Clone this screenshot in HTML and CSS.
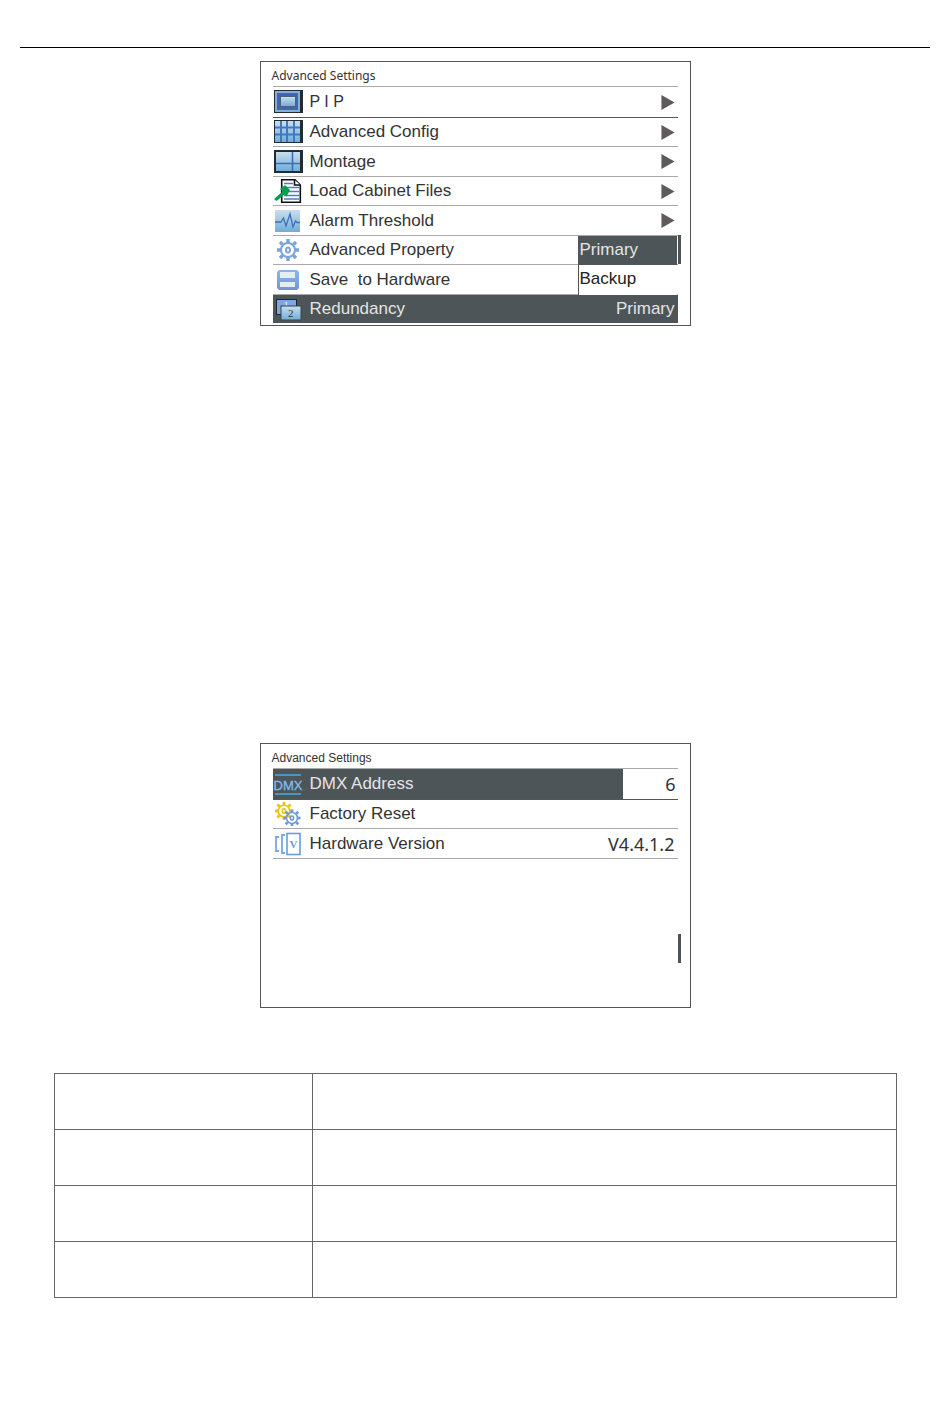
FILE: index.html
```html
<!DOCTYPE html>
<html lang="en">
<head>
  <meta charset="UTF-8" />
  <title>Advanced Settings</title>
  <link rel="stylesheet" href="styles.css">
</head>
<body>
  <svg width="0" height="0" class="defs" aria-hidden="true">
    <defs>
      <linearGradient id="sky" x1="0" y1="0" x2="0" y2="1">
        <stop offset="0" stop-color="#c9dfed"/><stop offset="1" stop-color="#70add9"/>
      </linearGradient>
      <linearGradient id="blue" x1="0" y1="0" x2="0" y2="1">
        <stop offset="0" stop-color="#8fb4e6"/><stop offset="1" stop-color="#6f96d2"/>
      </linearGradient>
      <g id="gear">
        <circle r="7" fill="none" stroke-width="2"/>
        <path d="M0-11V-7M0 7V11M-11 0H-7M7 0H11M-8-8L-5.5-5.5M5.5 5.5L8 8M-8 8L-5.5 5.5M5.5-5.5L8-8" stroke-width="3.4"/>
        <ellipse rx="2" ry="2.6" fill="none" stroke-width="2"/>
      </g>
    </defs>
  </svg>

  <header class="page-rule"></header>

  <main>
    <section class="panel">
      <h2 class="panel-title wide">Advanced Settings</h2>
      <ul class="menu">
        <li>
          <button class="item">
            <svg class="icon" viewBox="0 0 30 24">
              <rect x="1" width="29" height="23" fill="#242b33"/>
              <rect x="2" y="1" width="25" height="21" fill="#7fb0d6"/>
              <rect x="4.5" y="3.5" width="20" height="16" fill="#3e65b3" stroke="#606774"/>
              <rect x="7.5" y="6.5" width="15" height="10" fill="url(#sky)" stroke="#50617c"/>
            </svg>
            <span class="label small">P I P</span>
            <svg class="arrow" viewBox="0 0 14 16"><path d="M0 0L14 8L0 16Z"/></svg>
          </button>
        </li>
        <li class="dark-line">
          <button class="item">
            <svg class="icon" viewBox="0 0 30 24">
              <rect x="1" width="29" height="23" fill="#242b33"/>
              <rect x="2" y="1" width="25" height="21" fill="url(#sky)"/>
              <path d="M8 1V22M14 1V22M21 1V22M2 7.5H27M2 14.5H27" stroke="#4478bd" stroke-width="2"/>
            </svg>
            <span class="label">Advanced Config</span>
            <svg class="arrow" viewBox="0 0 14 16"><path d="M0 0L14 8L0 16Z"/></svg>
          </button>
        </li>
        <li>
          <button class="item">
            <svg class="icon" viewBox="0 0 30 24">
              <rect x="1" width="29" height="23" fill="#242b33"/>
              <rect x="3" y="2" width="24" height="19" fill="url(#sky)"/>
              <path d="M19.5 2V21M3 13.5H27" stroke="#3c70b5" stroke-width="1.6"/>
            </svg>
            <span class="label">Montage</span>
            <svg class="arrow" viewBox="0 0 14 16"><path d="M0 0L14 8L0 16Z"/></svg>
          </button>
        </li>
        <li>
          <button class="item">
            <svg class="icon" viewBox="0 0 30 24">
              <path d="M8.7.7H22L27.3 6V23.3H8.7Z" fill="#fff" stroke="#111" stroke-width="1.6"/>
              <path d="M21.5.7V6H27.3" fill="#fff" stroke="#111" stroke-width="1.6"/>
              <path d="M11 4.5H20M11 8.5H26M11 12.5H26M11 16.5H26M11 20H26" stroke="#527bc1" stroke-width="1.5"/>
              <path d="M1 20L3.5 22L11.5 15.5L13.5 17.5L17 11L12 6L7 10L9.5 12.5Z" fill="#00a052"/>
            </svg>
            <span class="label">Load Cabinet Files</span>
            <svg class="arrow" viewBox="0 0 14 16"><path d="M0 0L14 8L0 16Z"/></svg>
          </button>
        </li>
        <li>
          <button class="item">
            <svg class="icon" viewBox="0 0 30 24">
              <rect x="2" y="1" width="25" height="22" fill="url(#sky)"/>
              <path d="M2 13H8L10.5 9L13 17L17 5L20 18L22.5 12L24 13.5H27" fill="none" stroke="#3f6fb8" stroke-width="1.3"/>
            </svg>
            <span class="label">Alarm Threshold</span>
            <svg class="arrow" viewBox="0 0 14 16"><path d="M0 0L14 8L0 16Z"/></svg>
          </button>
        </li>
        <li>
          <button class="item">
            <svg class="icon" viewBox="0 0 30 24">
              <use href="#gear" transform="translate(15 12)" stroke="#7ba4dc"/>
            </svg>
            <span class="label">Advanced Property</span>
          </button>
        </li>
        <li>
          <button class="item">
            <svg class="icon" viewBox="0 0 30 24">
              <path d="M6 2H24L26 4V20L24 22H6L4 20V4Z" fill="url(#blue)"/>
              <rect x="7" y="4" width="15" height="6" fill="#e3edf5"/>
              <rect x="7" y="14" width="15" height="5" fill="#e3edf5"/>
            </svg>
            <span class="label">Save&nbsp; to Hardware</span>
          </button>
        </li>
        <li class="selected">
          <div class="item">
            <svg class="icon" viewBox="0 0 30 24">
              <rect x="3.5" y="2.5" width="20" height="15" fill="#7da6e2" stroke="#20262b"/>
              <text x="11" y="10" font-size="8" fill="#fff">1</text>
              <rect x="8" y="9" width="20" height="14" fill="url(#sky)" stroke="#34424d"/>
              <text class="serif" x="15" y="20" font-size="11" fill="#333">2</text>
            </svg>
            <label class="label" for="redundancy">Redundancy</label>
            <output class="value" for="redundancy">Primary</output>
          </div>
          <select id="redundancy" class="options" size="2">
            <option selected>Primary</option>
            <option>Backup</option>
          </select>
        </li>
      </ul>
      <span class="scroll-mark upper"></span>
    </section>

    <section class="panel">
      <h2 class="panel-title">Advanced Settings</h2>
      <ul class="menu">
        <li class="editing">
          <div class="item">
            <svg class="icon" viewBox="0 0 30 24">
              <path d="M2 3H28M2 22H28" stroke="#4aa8e8" stroke-width="1.6"/>
              <text class="dmx" x="15" y="18" text-anchor="middle">DMX</text>
            </svg>
            <label class="label" for="dmx">DMX Address</label>
          </div>
          <input id="dmx" class="number" type="text" value="6">
        </li>
        <li class="dark-line">
          <button class="item">
            <svg class="icon" viewBox="0 0 30 24">
              <use href="#gear" transform="translate(11 9) scale(.82)" stroke="#e8c313"/>
              <use href="#gear" transform="translate(19 16) scale(.78)" stroke="#6e9ad7"/>
            </svg>
            <span class="label">Factory Reset</span>
          </button>
        </li>
        <li>
          <div class="item">
            <svg class="icon" viewBox="0 0 30 24">
              <path d="M6 5H3V19H6M12 3H9V21H12" fill="none" stroke="#7ba7df" stroke-width="1.8"/>
              <rect x="14" y="1.5" width="13" height="21" fill="#fff" stroke="#6c9bdb" stroke-width="1.6"/>
              <text class="serif bold" x="20.5" y="16" font-size="11" text-anchor="middle" fill="#6c9bdb">V</text>
            </svg>
            <span class="label">Hardware Version</span>
            <span class="value large">V4.4.1.2</span>
          </div>
        </li>
        <li class="end"></li>
      </ul>
      <span class="scroll-mark lower"></span>
    </section>

    <table class="details">
      <tbody>
        <tr><td></td><td></td></tr>
        <tr><td></td><td></td></tr>
        <tr><td></td><td></td></tr>
        <tr><td></td><td></td></tr>
      </tbody>
    </table>
  </main>
</body>
</html>
```
FILE: styles.css
```css
* { box-sizing: border-box; margin: 0; padding: 0; }
body { font-family: "Liberation Sans", Arial, sans-serif; font-size: 17px; color: #333; background: #fff; padding: 47px 20px 100px; }
button, select, input { font: inherit; color: inherit; }
.defs { position: absolute; }

.page-rule { border-top: 1px solid #000; margin-bottom: 13px; }

.panel {
  position: relative;
  width: 100%;
  max-width: 431px;
  min-height: 265px;
  margin: 0 auto;
  padding-bottom: 1px;
  border: 1px solid #555;
}

.panel + .panel { margin-top: 417px; }

.panel-title {
  height: 24px;
  padding-left: 11px;
  font-size: 12px;
  font-weight: normal;
  line-height: 28px;
}

.wide, .large { font-family: "Noto Sans", "Open Sans", sans-serif; }
.small { font-size: 16px; }
.large { font-size: 18px; }

.menu { list-style: none; margin: 0 12px; }
.menu li {
  position: relative;
  display: flex;
  height: 30px;
  border-top: 1px solid #aaa;
}
.menu li:nth-child(even) { height: 29px; }
.menu li:first-child { height: 31px; }
.menu li.dark-line { border-top-color: #555; }
.menu li.end { height: 1px; }

.item {
  display: flex;
  flex: 1;
  align-items: center;
  gap: 7px;
  padding-right: 3px;
  border: none;
  background: transparent;
  text-align: left;
}

button.item { cursor: pointer; }
.icon { flex: none; width: 30px; height: 24px; }
.label { flex: 1; line-height: 24px; }
.arrow { width: 14px; height: 15px; fill: #5f5b5b; }

.serif { font-family: "Liberation Serif", serif; }
.bold { font-weight: bold; }
.dmx { font-size: 13px; fill: #7fbdf0; stroke: #7fbdf0; stroke-width: 0.3; }

.selected, .editing .item { background: #4d5558; color: #e4e4e4; }

/* open drop-down above the Redundancy row */
.options {
  position: absolute;
  right: 1px;
  bottom: 100%;
  width: 99px;
  height: 59px;
  border: none;
  border-left: 1px solid #555;
  border-radius: 0;
  outline: none;
  overflow: hidden;
  background: #fff;
  color: #222;
}

.options option { height: 29px; line-height: 21px; padding: 4px 1px; }
.options option:checked { background: #4d5558 linear-gradient(#4d5558, #4d5558); color: #e4e4e4; }

.number {
  width: 55px;
  padding-right: 2px;
  border: none;
  outline: none;
  background: #fff;
  font-family: "Noto Sans", "Open Sans", sans-serif;
  font-size: 18px;
  text-align: right;
}

.scroll-mark { position: absolute; right: 9px; width: 3px; height: 29px; background: #4d5558; }
.upper { top: 173px; }
.lower { top: 190px; }

.details {
  width: calc(100% - 67px);
  margin: 65px 33px 0 34px;
  border-collapse: collapse;
}

.details td { height: 56px; border: 1px solid #666; }
.details td:first-child { width: 258px; }
```
